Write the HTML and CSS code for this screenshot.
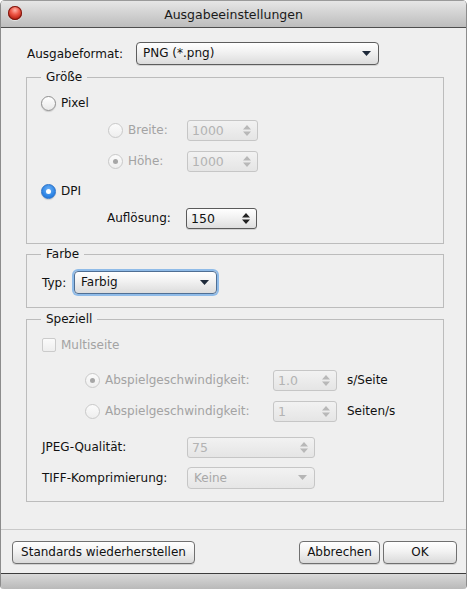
FILE: index.html
```html
<html>

<head>
    <title>Ausgabeeinstellungen</title>
    <link rel="stylesheet" href="styles.css">
</head>

<body>
    <div class="window">
        <div class="titlebar">
            <span class="closebtn"></span>
            <span class="title">Ausgabeeinstellungen</span>
        </div>

        <div class="content">
            <div class="row format-row">
                <span class="lbl format-lbl">Ausgabeformat:</span>
                <div class="select format-select">
                    <span>PNG (*.png)</span>
                    <svg class="caret" width="9" height="5" viewBox="0 0 9 5"><path d="M0 0H9L4.5 5Z"/></svg>
                </div>
            </div>

            <fieldset class="group size-group">
                <legend>Größe</legend>
                <div class="row">
                    <span class="radio"></span>
                    <span class="lbl">Pixel</span>
                </div>
                <div class="row sub-row breite-row">
                    <span class="radio off"></span>
                    <span class="lbl off sub-lbl">Breite:</span>
                    <div class="spin off">
                        <span>1000</span>
                        <svg class="arrows" width="8" height="11" viewBox="0 0 8 11"><path d="M0 4.5L4 0L8 4.5Z M0 6.5H8L4 11Z"/></svg>
                    </div>
                </div>
                <div class="row sub-row hoehe-row">
                    <span class="radio off checked"></span>
                    <span class="lbl off sub-lbl">Höhe:</span>
                    <div class="spin off">
                        <span>1000</span>
                        <svg class="arrows" width="8" height="11" viewBox="0 0 8 11"><path d="M0 4.5L4 0L8 4.5Z M0 6.5H8L4 11Z"/></svg>
                    </div>
                </div>
                <div class="row dpi-row">
                    <span class="radio on"></span>
                    <span class="lbl">DPI</span>
                </div>
                <div class="row aufl-row">
                    <span class="lbl aufl-lbl">Auflösung:</span>
                    <div class="spin">
                        <span>150</span>
                        <svg class="arrows" width="8" height="11" viewBox="0 0 8 11"><path d="M0 4.5L4 0L8 4.5Z M0 6.5H8L4 11Z"/></svg>
                    </div>
                </div>
            </fieldset>

            <fieldset class="group color-group">
                <legend>Farbe</legend>
                <div class="row typ-row">
                    <span class="lbl typ-lbl">Typ:</span>
                    <div class="select typ-select focused">
                        <span>Farbig</span>
                        <svg class="caret" width="9" height="5" viewBox="0 0 9 5"><path d="M0 0H9L4.5 5Z"/></svg>
                    </div>
                </div>
            </fieldset>

            <fieldset class="group special-group">
                <legend>Speziell</legend>
                <div class="row multi-row">
                    <span class="check off"></span>
                    <span class="lbl off">Multiseite</span>
                </div>
                <div class="row speed-row speed1">
                    <span class="radio off checked"></span>
                    <span class="lbl off speed-lbl">Abspielgeschwindigkeit:</span>
                    <div class="spin off speed-spin">
                        <span>1.0</span>
                        <svg class="arrows" width="8" height="11" viewBox="0 0 8 11"><path d="M0 4.5L4 0L8 4.5Z M0 6.5H8L4 11Z"/></svg>
                    </div>
                    <span class="lbl unit">s/Seite</span>
                </div>
                <div class="row speed-row speed2">
                    <span class="radio off"></span>
                    <span class="lbl off speed-lbl">Abspielgeschwindigkeit:</span>
                    <div class="spin off speed-spin">
                        <span>1</span>
                        <svg class="arrows" width="8" height="11" viewBox="0 0 8 11"><path d="M0 4.5L4 0L8 4.5Z M0 6.5H8L4 11Z"/></svg>
                    </div>
                    <span class="lbl unit">Seiten/s</span>
                </div>
                <div class="row jpeg-row">
                    <span class="lbl opt-lbl">JPEG-Qualität:</span>
                    <div class="spin off opt-field">
                        <span>75</span>
                        <svg class="arrows" width="8" height="11" viewBox="0 0 8 11"><path d="M0 4.5L4 0L8 4.5Z M0 6.5H8L4 11Z"/></svg>
                    </div>
                </div>
                <div class="row tiff-row">
                    <span class="lbl opt-lbl">TIFF-Komprimierung:</span>
                    <div class="select off opt-field">
                        <span>Keine</span>
                        <svg class="caret" width="9" height="5" viewBox="0 0 9 5"><path d="M0 0H9L4.5 5Z"/></svg>
                    </div>
                </div>
            </fieldset>
        </div>

        <div class="footer">
            <button class="btn reset-btn">Standards wiederherstellen</button>
            <span class="spacer"></span>
            <button class="btn cancel-btn">Abbrechen</button>
            <button class="btn ok-btn">OK</button>
        </div>
        <div class="bottombar"></div>
    </div>
</body>

</html>
```

FILE: styles.css
```css
* {
    margin: 0;
    padding: 0;
    box-sizing: border-box;
}

body {
    background-color: white;
    font-family: 'DejaVu Sans', sans-serif;
    font-size: 12px;
    color: #111;
}

.window {
    width: 467px;
    background-color: #efefef;
    border-left: 1px solid #8c8c8c;
    border-right: 1px solid #8c8c8c;
    border-radius: 5px 5px 4px 4px;
    overflow: hidden;
}

/* title bar */
.titlebar {
    height: 28px;
    display: flex;
    align-items: center;
    justify-content: center;
    background: linear-gradient(#e6e6e6, #cdcdcd 60%, #bdbdbd);
    border-top: 1px solid #9a9a9a;
    border-bottom: 1px solid #4e4e4e;
    position: relative;
}
.title {
    font-size: 12.5px;
    color: #1a1a1a;
    padding-top: 1px;
}
.closebtn {
    position: absolute;
    left: 7px;
    top: 5px;
    width: 14px;
    height: 14px;
    border-radius: 50%;
    background: radial-gradient(circle at 50% 30%, #ffb3a8 0, #f05a4a 35%, #b91d0f 75%, #8a1408 100%);
    box-shadow: 0 0 0 1px #7a1a12 inset, 0 1px 1px rgba(255,255,255,0.6);
}

/* main area */
.content {
    padding: 14px 22px 27px 25px;
}

.row {
    display: flex;
    align-items: center;
    height: 20px;
}

.lbl {
    white-space: nowrap;
}
.lbl.off {
    color: #a3a3a3;
}

.format-row {
    height: 23px;
}
.format-lbl {
    width: 110px;
    padding-left: 1px;
}

.select {
    height: 23px;
    display: flex;
    align-items: center;
    justify-content: space-between;
    padding: 0 7px 1px 6px;
    border: 1px solid #5d5d5d;
    border-radius: 4px;
    background: linear-gradient(#ffffff, #f1f1f1 45%, #dcdcdc);
    box-shadow: 0 1px 0 rgba(0,0,0,0.12);
    color: #111;
}
.select .caret {
    fill: #1e2a3a;
}
.select.off {
    border-color: #c6c6c6;
    background: linear-gradient(#f2f2f2, #e6e6e6);
    color: #a8a8a8;
    box-shadow: none;
}
.select.off .caret {
    fill: #b5b5b5;
}
.format-select {
    width: 243px;
}

/* groups */
.group {
    border: 1px solid #bcbcbc;
    padding: 8px 14px 15px 14px;
    margin-top: 5px;
}
.group legend {
    padding: 0 5px;
    line-height: 15px;
}

.color-group {
    margin-top: 3px;
    padding: 9px 14px 13px 14px;
}
.special-group {
    margin-top: 4px;
    padding: 11px 14px 12px 14px;
}

/* radios, checkboxes */
.radio {
    width: 15px;
    height: 15px;
    border-radius: 50%;
    border: 1px solid #8f8f8f;
    background: linear-gradient(#ffffff, #e9e9e9);
    box-shadow: 0 1px 1px rgba(0,0,0,0.15);
    margin-right: 5px;
    display: flex;
    align-items: center;
    justify-content: center;
    flex: none;
}
.radio.off {
    border-color: #c9c9c9;
    background: linear-gradient(#fbfbfb, #eeeeee);
    box-shadow: none;
}
.radio.checked::after {
    content: "";
    width: 5px;
    height: 5px;
    border-radius: 50%;
    background-color: #a6a6a6;
}
.radio.on {
    border-color: #2a72c8;
    background: radial-gradient(circle at 50% 35%, #6fb2f5, #2f86e6 60%, #1d6bcd);
}
.radio.on::after {
    content: "";
    width: 5px;
    height: 5px;
    border-radius: 50%;
    background-color: white;
}

.check {
    width: 14px;
    height: 14px;
    border: 1px solid #cbcbcb;
    border-radius: 2px;
    background: linear-gradient(#fbfbfb, #eeeeee);
    margin-left: 1px;
    margin-right: 5px;
}

/* spin fields */
.spin {
    height: 21px;
    width: 71px;
    display: flex;
    align-items: center;
    justify-content: space-between;
    padding: 0 6px 0 4px;
    border: 1px solid #5a5a5a;
    border-radius: 3px;
    background: linear-gradient(#ffffff, #f0f0f0 50%, #dedede);
    box-shadow: 0 1px 0 rgba(0,0,0,0.12);
    color: #111;
    font-size: 12.5px;
}
.spin .arrows {
    fill: #222;
}
.spin.off {
    border-color: #c6c6c6;
    background: linear-gradient(#f2f2f2, #e5e5e5);
    color: #b3b3b3;
    box-shadow: none;
}
.spin.off .arrows {
    fill: #b8b8b8;
}

/* Größe rows */
.sub-row {
    padding-left: 67px;
}
.breite-row {
    margin-top: 7px;
}
.hoehe-row {
    margin-top: 11px;
}
.sub-lbl {
    width: 59px;
}
.dpi-row {
    margin-top: 10px;
}
.aufl-row {
    margin-top: 7px;
    padding-left: 66px;
}
.aufl-lbl {
    width: 79px;
}

/* Farbe */
.typ-row {
    height: 23px;
}
.typ-lbl {
    width: 33px;
    padding-left: 1px;
}
.typ-select {
    width: 143px;
}
.select.focused {
    border-color: #4f6f94;
    box-shadow: 0 0 0 2px #8fbbe8;
}

/* Speziell */
.multi-row {
    height: 14px;
}
.speed-row {
    padding-left: 44px;
}
.speed1 {
    margin-top: 18px;
}
.speed2 {
    margin-top: 11px;
}
.speed-lbl {
    width: 168px;
}
.speed-spin {
    width: 64px;
}
.unit {
    margin-left: 10px;
}
.jpeg-row {
    margin-top: 16px;
}
.tiff-row {
    margin-top: 10px;
    height: 22px;
}
.tiff-row .select {
    height: 22px;
}
.opt-lbl {
    width: 146px;
    padding-left: 1px;
}
.opt-field {
    width: 128px;
}

/* footer */
.footer {
    display: flex;
    align-items: center;
    border-top: 1px solid #c9c9c9;
    border-bottom: 1px solid #3c3c3c;
    padding: 11px 9px 9px 11px;
}
.spacer {
    flex: 1;
}
.btn {
    height: 23px;
    font-family: 'DejaVu Sans', sans-serif;
    font-size: 12px;
    color: #111;
    border: 1px solid #707070;
    border-radius: 4px;
    background: linear-gradient(#ffffff, #f2f2f2 45%, #dadada);
    box-shadow: 0 1px 0 rgba(0,0,0,0.12);
    padding: 0 6px 1px 6px;
}
.reset-btn {
    width: 183px;
}
.cancel-btn {
    width: 81px;
}
.ok-btn {
    width: 74px;
    margin-left: 3px;
}

.bottombar {
    height: 15px;
    background: linear-gradient(#d9d9d9, #b9b9b9);
}
```
